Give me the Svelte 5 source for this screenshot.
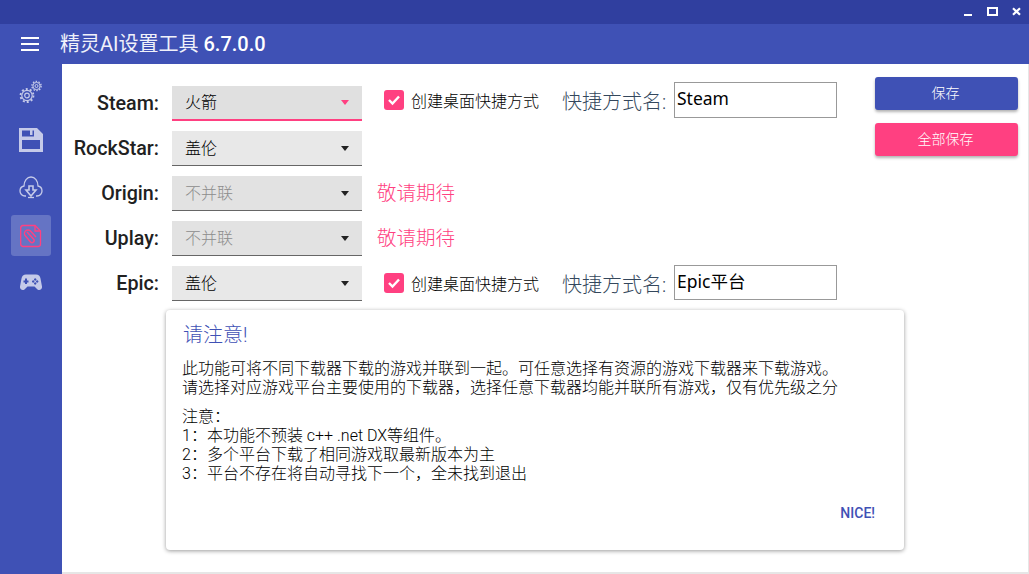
<script>
  const rows = [
    { label: 'Steam', value: '火箭', active: true, shortcut: 'Steam', top: true },
    { label: 'RockStar', value: '盖伦' },
    { label: 'Origin', value: '不并联', disabled: true, soon: true },
    { label: 'Uplay', value: '不并联', disabled: true, soon: true },
    { label: 'Epic', value: '盖伦', shortcut: 'Epic平台' }
  ];
</script>

<div class="window">
  <div class="titlebar">
    <svg class="winicons" width="65" height="24" viewBox="0 0 65 24">
      <rect x="0" y="14" width="8" height="2" fill="#fff" />
      <rect x="24" y="8" width="9" height="7" fill="none" stroke="#fff" stroke-width="2" />
      <path d="M49 8.200l7 6.600M56 8.200l-7 6.600" stroke="#fff" stroke-width="2.200" fill="none" />
    </svg>
  </div>

  <header class="appbar">
    <div class="burger"><span></span><span></span><span></span></div>
    <div class="apptitle">精灵AI设置工具 <b>6.7.0.0</b></div>
  </header>

  <div class="body">
    <nav class="side">
      <div class="navitem">
        <svg width="24" height="24" viewBox="0 0 24 24" fill="none" stroke="#c5cae9">
          <circle cx="8" cy="15.500" r="5.200" stroke-width="1.200" />
          <circle cx="8" cy="15.500" r="6.500" stroke-width="1.800" stroke-dasharray="2 2.080" />
          <circle cx="8" cy="15.500" r="2.300" stroke-width="1.200" />
          <circle cx="17.500" cy="6" r="3.600" stroke-width="1" />
          <circle cx="17.500" cy="6" r="4.600" stroke-width="1.400" stroke-dasharray="1.500 1.390" />
          <circle cx="17.500" cy="6" r="1.500" stroke-width="1" />
        </svg>
      </div>
      <div class="navitem">
        <svg width="24" height="24" viewBox="0 0 24 24">
          <path fill="#c5cae9" fill-rule="evenodd" d="M0 0H18L24 6V24H0ZM3 2.500V8.500H15V2.500H13.500V7H11V2.500ZM3 12V21H21V12Z" />
        </svg>
      </div>
      <div class="navitem">
        <svg width="24" height="26" viewBox="0 0 24 26" fill="none" stroke="#c5cae9" stroke-width="1.300">
          <path d="M7 21H6C3 21 1 18.500 1 16C1 13.500 2.500 11.500 5 11C5 6 8 2 12 2C16 2 19 6 19 11C21.500 11.500 23 13.500 23 16C23 18.500 21 21 18 21H17" />
          <path d="M10 11H14V15H17L12 21L7 15H10Z" stroke-width="1.600" />
          <path d="M9 22.500H15" />
        </svg>
      </div>
      <div class="navitem selected">
        <svg width="22" height="24" viewBox="0 0 22 24" fill="none" stroke="#ff4081" stroke-width="1.300">
          <path d="M3 1.500H15L20.500 7V20A2.500 2.500 0 0 1 18 22.500H3A2.500 2.500 0 0 1 .7 20V4A2.500 2.500 0 0 1 3 1.500Z" />
          <path d="M15 1.500V7H20.500" />
          <path stroke-width="1.500" d="M7 8L13.500 15A2 2 0 0 1 10.500 18L5.500 12A3.500 3.500 0 0 1 10.500 7L16 13" />
        </svg>
      </div>
      <div class="navitem">
        <svg class="pad" width="22" height="17" viewBox="0 0 22 16">
          <path fill="#c5cae9" fill-rule="evenodd" d="M6 0H16C18.500 0 20 1.500 20.500 4L22 12C22.400 14.500 20 16.500 17.500 15L14.500 12H7.500L4.500 15C2 16.500 -.4 14.500 0 12L1.500 4C2 1.500 3.500 0 6 0ZM5 4V6H3.500V8H5V9.500H7V8H8.500V6H7V4ZM15.200 3.800a1.200 1.200 0 1 0 .01 0ZM15.200 7.800a1.200 1.200 0 1 0 .01 0ZM13.200 5.800a1.200 1.200 0 1 0 .01 0ZM17.200 5.800a1.200 1.200 0 1 0 .01 0Z" />
        </svg>
      </div>
    </nav>

    <main class="content">
      <div class="top">
        <div class="form">
          {#each rows as row}
            <div class="row">
              <div class="label">{row.label}:</div>
              <div class="select" class:active={row.active} class:disabled={row.disabled}>
                <span>{row.value}</span>
                <i class="caret"></i>
              </div>
              {#if row.soon}
                <div class="soon">敬请期待</div>
              {/if}
              {#if row.shortcut}
                <div class="extras" class:raised={row.top}>
                  <div class="check">
                    <svg width="14" height="12" viewBox="0 0 14 12">
                      <path d="M2 6l3.500 3.500L12 2.500" fill="none" stroke="#fff" stroke-width="2.400" />
                    </svg>
                  </div>
                  <div class="checklabel">创建桌面快捷方式</div>
                  <div class="shortlabel">快捷方式名:</div>
                  <div class="shortinput" class:tall={row.top}>{row.shortcut}</div>
                </div>
              {/if}
            </div>
          {/each}
        </div>

        <div class="actions">
          <div class="btn primary">保存</div>
          <div class="btn accent">全部保存</div>
        </div>
      </div>

      <section class="card">
        <h2>请注意!</h2>
        <p>此功能可将不同下载器下载的游戏并联到一起。可任意选择有资源的游戏下载器来下载游戏。<br />请选择对应游戏平台主要使用的下载器，选择任意下载器均能并联所有游戏，仅有优先级之分</p>
        <p class="notes">注意：<br />1：本功能不预装 c++ .net DX等组件。<br />2：多个平台下载了相同游戏取最新版本为主<br />3：平台不存在将自动寻找下一个，全未找到退出</p>
        <div class="nice">NICE!</div>
      </section>
    </main>
  </div>
</div>

<style>
  :global(body) {
    margin: 0;
    background: #3f51b5;
  }

  .window {
    width: 1029px;
    height: 574px;
    display: flex;
    flex-direction: column;
    overflow: hidden;
    font-family: "Roboto", "Noto Sans CJK SC", sans-serif;
  }

  .titlebar {
    height: 24px;
    background: #303f9f;
    display: flex;
    justify-content: flex-end;
  }

  .winicons {
    display: block;
  }

  .appbar {
    height: 40px;
    background: #3f51b5;
    display: flex;
    align-items: center;
    color: #fff;
  }

  .burger {
    width: 18px;
    margin-left: 21px;
    display: flex;
    flex-direction: column;
    gap: 4px;
  }

  .burger span {
    height: 2px;
    background: #fff;
  }

  .apptitle {
    margin-left: 21px;
    font-size: 20px;
    font-weight: 400;
    color: #f0f1fa;
    line-height: 40px;
  }

  .apptitle b {
    font-weight: 500;
    color: #fff;
  }

  .body {
    flex: 1;
    display: flex;
    min-height: 0;
  }

  .side {
    width: 62px;
    flex: none;
    display: flex;
    flex-direction: column;
    align-items: center;
    padding-top: 7px;
    gap: 7px;
    box-sizing: border-box;
  }

  .navitem {
    width: 40px;
    height: 41px;
    display: flex;
    align-items: center;
    justify-content: center;
    border-radius: 3px;
  }

  .navitem.selected {
    background: #6574c4;
  }

  .pad {
    margin-bottom: 2px;
  }

  .content {
    flex: 1;
    background: #fff;
    border-right: 1px solid #e6e6e6;
    border-bottom: 2px solid #e6e6e6;
    display: flex;
    flex-direction: column;
    box-sizing: border-box;
    padding-top: 13px;
  }

  .top {
    display: flex;
    justify-content: space-between;
    height: 233px;
  }

  .form {
    display: flex;
    flex-direction: column;
    padding-top: 9px;
    gap: 10px;
  }

  .row {
    display: flex;
    align-items: center;
    height: 35px;
  }

  .label {
    width: 97px;
    text-align: right;
    font-size: 19.700px;
    font-weight: 500;
    color: #212121;
    margin-right: 13px;
    white-space: nowrap;
  }

  .select {
    width: 190px;
    height: 35px;
    box-sizing: border-box;
    background: #e8e8e8;
    border-bottom: 1px solid #666;
    padding: 0 0 3px 13px;
    display: flex;
    align-items: center;
    justify-content: space-between;
    font-size: 16px;
    font-weight: 300;
    color: #000;
  }

  .select.active {
    background: #e0e0e0;
    border-bottom: 2px solid #ff4081;
  }

  .select.disabled {
    background: #e2e2e2;
    color: #8c8c8c;
  }

  .caret {
    width: 0;
    height: 0;
    margin: 3px 13px 0 0;
    border-left: 4.500px solid transparent;
    border-right: 4.500px solid transparent;
    border-top: 5px solid #222;
  }

  .select.active .caret {
    border-top-color: #ff4081;
  }

  .soon {
    margin: 0 0 4px 15px;
    font-size: 19.500px;
    font-weight: 300;
    color: #ff4081;
  }

  .extras {
    display: flex;
    align-items: center;
    margin-bottom: 1px;
  }

  .extras.raised {
    margin-bottom: 7px;
  }

  .check {
    width: 20px;
    height: 20px;
    margin-left: 22px;
    border-radius: 3px;
    background: #ff4081;
    display: flex;
    align-items: center;
    justify-content: center;
  }

  .checklabel {
    margin-left: 7px;
    width: 151px;
    font-size: 16px;
    font-weight: 300;
    color: #000;
  }

  .shortlabel {
    width: 112px;
    font-size: 20px;
    font-weight: 300;
    color: #34475c;
    white-space: nowrap;
  }

  .shortinput {
    width: 163px;
    height: 35px;
    margin-top: -2px;
    box-sizing: border-box;
    border: 1px solid #999;
    padding: 2px;
    font-size: 17.500px;
    font-family: "Noto Sans", "Noto Sans CJK SC", sans-serif;
    line-height: 26px;
    color: #000;
  }

  .shortinput.tall {
    height: 36px;
    margin-top: 0;
  }

  .actions {
    display: flex;
    flex-direction: column;
    gap: 13px;
    margin-right: 10px;
  }

  .btn {
    width: 143px;
    height: 33px;
    border-radius: 3px;
    display: flex;
    align-items: center;
    justify-content: center;
    color: #fff;
    font-size: 14px;
    font-weight: 300;
    box-shadow: 0 2px 3px rgba(0, 0, 0, 0.3);
    padding: 0 2px 3px 0;
    box-sizing: border-box;
  }

  .primary {
    background: #3f51b5;
  }

  .accent {
    background: #ff4081;
  }

  .card {
    width: 738px;
    height: 240px;
    margin-left: 104px;
    box-sizing: border-box;
    padding: 13px 17px 0;
    border-radius: 4px;
    background: #fff;
    box-shadow: 0 1px 4px rgba(0, 0, 0, 0.4);
    position: relative;
  }

  h2 {
    margin: 0 0 11px;
    font-size: 20px;
    font-weight: 300;
    line-height: 25px;
    color: #3f51b5;
  }

  p {
    margin: 0 0 0 -1px;
    font-size: 16px;
    line-height: 19px;
    font-weight: 300;
    color: #000;
  }

  .notes {
    margin-top: 10px;
  }

  .nice {
    position: absolute;
    right: 29px;
    bottom: 29px;
    font-size: 14px;
    font-weight: 500;
    color: #3f51b5;
  }
</style>
